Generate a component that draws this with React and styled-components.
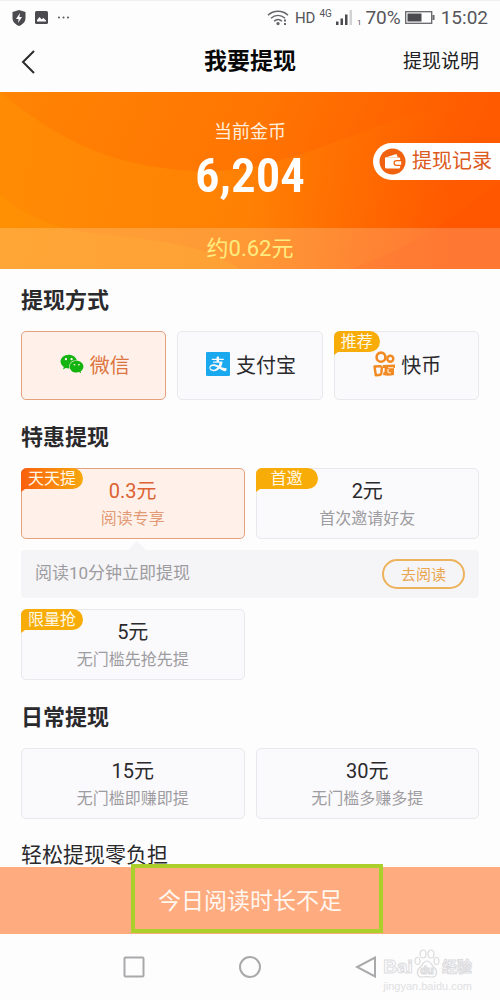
import React from 'react';
import styled, { createGlobalStyle, css } from 'styled-components';
import { AiFillAlipaySquare } from 'react-icons/ai';
import { FaWeixin } from 'react-icons/fa';

const GlobalStyle = createGlobalStyle`
  * {
    box-sizing: border-box;
  }
  body {
    margin: 0;
    background: #fdfdfe;
    color: #2a292c;
    font-family: Roboto, "Noto Sans CJK SC", sans-serif;
  }
  button {
    padding: 0;
    border: 0;
    background: none;
    color: inherit;
    font-family: inherit;
    cursor: pointer;
  }
  a {
    text-decoration: none;
  }
  svg {
    display: block;
    flex: none;
  }
`;

const Screen = styled.div`
  display: flex;
  flex-direction: column;
`;

const StatusBar = styled.div`
  display: flex;
  align-items: center;
  justify-content: space-between;
  height: 32px;
  padding: 2px 12px 0;
  border-top: 1px solid #f0f0f0;
  color: #55555a;
`;

const StatusGroup = styled.div`
  display: flex;
  align-items: center;
  gap: ${(props) => props.$gap}px;
`;

const StatusText = styled.span`
  font-size: ${(props) => props.$size}px;
  line-height: 20px;
`;

const NetworkText = styled.sup`
  align-self: flex-start;
  font-size: 10px;
  line-height: 12px;
`;

const SimText = styled.sub`
  align-self: flex-end;
  font-size: 8px;
  line-height: 10px;
`;

const Header = styled.header`
  display: grid;
  grid-template-columns: 1fr auto 1fr;
  align-items: center;
  height: 60px;
  padding: 0 21px;
`;

const BackButton = styled.button`
  justify-self: start;
`;

const PageTitle = styled.h1`
  margin: 0;
  color: #080808;
  font-size: 23px;
  font-weight: 700;
  line-height: 32px;
`;

const HelpLink = styled.a`
  justify-self: end;
  color: #222;
  font-size: 19px;
  line-height: 28px;
`;

const Hero = styled.section`
  position: relative;
  text-align: center;
  background: linear-gradient(115deg, #ff8404 0%, #ff7602 45%, #ff5a00 85%);
`;

const HeroArt = styled.svg`
  position: absolute;
  inset: 0;
  width: 100%;
  height: 100%;
`;

const Balance = styled.div`
  position: relative;
  display: flex;
  flex-direction: column;
  align-items: center;
  height: 136px;
  padding-top: 27px;
`;

const BalanceLabel = styled.span`
  color: #ffeedd;
  font-size: 18px;
  line-height: 26px;
`;

const Coins = styled.strong`
  color: #fff;
  font-family: "Roboto Condensed", Roboto, sans-serif;
  font-size: 49px;
  font-weight: 600;
  line-height: 62px;
`;

const Approx = styled.div`
  position: relative;
  background: rgba(255, 255, 255, 0.2);
  color: #ffec80;
  font-size: 22px;
  line-height: 41px;
`;

/* sticks to the right edge, over the hero */
const RecordLink = styled.a`
  position: absolute;
  top: 51px;
  right: 0;
  display: flex;
  align-items: center;
  gap: 6px;
  height: 37px;
  padding: 0 8px 0 6px;
  border-radius: 19px 0 0 19px;
  background: #fff;
  color: #dc5a20;
  font-size: 20px;
  line-height: 28px;
`;

const RecordText = styled.span`
  padding-bottom: 1px;
`;

const Content = styled.main`
  padding: 17px 21px 0;
`;

const SectionTitle = styled.h2`
  margin: 0 0 15px;
  font-size: 22px;
  font-weight: 700;
  line-height: 30px;
`;

const NextTitle = styled.h2`
  margin: 0;
  height: 28px;
  overflow: hidden;
  font-size: 21px;
  font-weight: 400;
  line-height: 32px;
`;

const Grid = styled.div`
  display: grid;
  grid-template-columns: repeat(${(props) => props.$columns}, 1fr);
  gap: 11px;
  margin-bottom: ${(props) => props.$space}px;
`;

const Card = styled.button`
  position: relative;
  display: flex;
  align-items: center;
  justify-content: center;
  border: 1px solid #e9e8ec;
  border-radius: 5px;
  background: #faf9fc;

  ${(props) =>
    props.$active &&
    css`
      border-color: #e5a07c;
      background: #fff1ea;
    `}
`;

const MethodCard = styled(Card)`
  gap: 6px;
  height: 69px;
  padding: 0 0 3px 2px;
  color: ${(props) => (props.$active ? '#dc7440' : '#2a292c')};
  font-size: 20px;
`;

const AmountCard = styled(Card)`
  flex-direction: column;
  height: 71px;
  padding-top: 2px;
`;

const Amount = styled.span`
  color: ${(props) => (props.$active ? '#dc6232' : '#2a292c')};
  font-size: 20px;
  line-height: 28px;
`;

const Note = styled.span`
  color: ${(props) => (props.$active ? '#e29a75' : '#9d9ca0')};
  font-size: 16px;
  line-height: 27px;
`;

const Tag = styled.span`
  position: absolute;
  top: -1px;
  left: -1px;
  height: 21px;
  padding: 0 ${(props) => (props.$wide ? 15 : 7)}px;
  border-radius: 6px 11px 11px 0;
  background: ${(props) => (props.$hot ? 'linear-gradient(90deg, #f9600e, #f8a80c)' : '#f8ac08')};
  color: #fff8e6;
  font-size: 16px;
  line-height: 21px;

  &::after {
    content: '';
    position: absolute;
    top: 21px;
    left: 0;
    border-top: 3px solid ${(props) => (props.$hot ? '#f9600e' : '#f8ac08')};
    border-right: 4px solid transparent;
  }
`;

const Tip = styled.div`
  position: relative;
  grid-column: 1 / -1;
  display: flex;
  align-items: center;
  justify-content: space-between;
  height: 48px;
  padding: 0 14px;
  border-radius: 4px;
  background: #f5f4f7;
  color: #9d9ca0;
  font-size: 17px;

  &::before {
    content: '';
    position: absolute;
    bottom: 100%;
    left: 25%;
    margin-left: -8px;
    border: 9px solid transparent;
    border-top: 0;
    border-bottom-color: #f5f4f7;
  }
`;

const TipText = styled.span`
  padding-bottom: 5px;
`;

const ReadButton = styled.button`
  width: 83px;
  height: 30px;
  padding-bottom: 2px;
  border: 2px solid #edb25c;
  border-radius: 15px;
  color: #e9a54c;
  font-size: 15px;
`;

const SubmitBar = styled.footer`
  display: flex;
  justify-content: center;
  height: 67px;
  background: #ffab80;
`;

const SubmitButton = styled.button`
  position: relative;
  width: 50%;
  padding-bottom: 4px;
  color: #fff6ee;
  font-size: 23px;
`;

const Highlight = styled.span`
  position: absolute;
  inset: -3px -8px 1px 6px;
  border: 4px solid #abcf2b;
`;

const NavBar = styled.nav`
  position: relative;
  display: grid;
  grid-template-columns: repeat(3, 116px);
  justify-content: center;
  justify-items: center;
  align-items: center;
  height: 66px;
`;

const Watermark = styled.div`
  position: absolute;
  top: 13px;
  right: 28px;
  color: #e0e0e2;
`;

const WatermarkName = styled.div`
  display: flex;
  align-items: flex-end;
  justify-content: space-between;
  height: 32px;
  color: #fdfdfe;
  font-family: "Liberation Sans", "Noto Sans CJK SC", sans-serif;
  font-size: 19px;
  font-weight: 700;
  line-height: 24px;
  -webkit-text-stroke: 1px #dcdcde;
`;

const WatermarkCjk = styled.span`
  font-size: 15px;
`;

const WatermarkUrl = styled.div`
  font-family: "Liberation Sans", sans-serif;
  font-size: 11px;
  line-height: 14px;
`;

const methods = [
  { name: '微信', icon: 'wechat', active: true },
  { name: '支付宝', icon: 'alipay' },
  { name: '快币', icon: 'kuai', tag: '推荐' },
];

const specials = [
  { amount: '0.3元', note: '阅读专享', tag: '天天提', hot: true, active: true },
  { amount: '2元', note: '首次邀请好友', tag: '首邀', wide: true },
];

const limited = [{ amount: '5元', note: '无门槛先抢先提', tag: '限量抢' }];

const daily = [
  { amount: '15元', note: '无门槛即赚即提' },
  { amount: '30元', note: '无门槛多赚多提' },
];

const KuaiIcon = () => (
  <svg width="22" height="26" viewBox="0 0 22 26" fill="none" stroke="#f28a24" aria-hidden="true">
    <ellipse cx="8" cy="6.200" rx="4.400" ry="4.600" strokeWidth="2.600" />
    <circle cx="17.300" cy="7.800" r="3" strokeWidth="2.400" />
    <path d="M1.500 15.500l5.500-.3q2 0 1.800 2.300l-.5 4.500q-.3 2-2.300 2l-3.200.2z" strokeWidth="2.400" strokeLinejoin="round" />
    <path d="M10 14l12-.5v3.500h-1v7q-6 1.500-11 0l.6-3h1V17H10z" fill="#f28a24" stroke="none" />
    <path d="M15 16.800h5.500M15.300 21.800h2.500M15 18v3.500" stroke="#fdf3ea" strokeWidth="1.100" />
  </svg>
);

const MethodIcon = ({ icon }) => {
  if (icon === 'wechat') return <FaWeixin size={24} color="#14b30f" />;
  if (icon === 'alipay') return <AiFillAlipaySquare size={24} viewBox="112 112 800 800" color="#1aa9ee" />;
  return <KuaiIcon />;
};

const AmountOption = ({ option }) => (
  <AmountCard type="button" $active={option.active}>
    {option.tag && <Tag $hot={option.hot} $wide={option.wide}>{option.tag}</Tag>}
    <Amount $active={option.active}>{option.amount}</Amount>
    <Note $active={option.active}>{option.note}</Note>
  </AmountCard>
);

const Status = () => (
  <StatusBar>
    <StatusGroup $gap={9}>
      <svg width="14" height="16" viewBox="0 0 14 16">
        <path d="M7 0l6.500 2v6c0 4-3 6.500-6.500 8C3.500 14.500.5 12 .5 8V2z" fill="#4b4b4f" />
        <path d="M8 3L4 9h2.600L6 13l4-6H7.400z" fill="#fff" />
      </svg>
      <svg width="13" height="13" viewBox="0 0 13 13">
        <rect width="13" height="13" rx="1.500" fill="#4b4b4f" />
        <path d="M2 10.500V9l2.500-3 2 2.300L8.500 7l2.500 2.500v1z" fill="#fff" />
      </svg>
      <svg width="13" height="3" viewBox="0 0 13 3" fill="#55555a">
        <circle cx="2" cy="1.500" r="1" />
        <circle cx="6.500" cy="1.500" r="1" />
        <circle cx="11" cy="1.500" r="1" />
      </svg>
    </StatusGroup>
    <StatusGroup $gap={4}>
      <svg width="24" height="16" viewBox="0 0 24 16" fill="none" stroke="#66666a" strokeWidth="1.400">
        <path d="M1 5.200c5.500-5.300 14.500-5.300 20 0M4 8.300c4-3.900 10-3.900 14 0M7 11.300c2.500-2.300 5.500-2.300 8 0" />
        <circle cx="11" cy="13.600" r="1" fill="#66666a" />
        <path d="M18 9.500v2M18 13v2" strokeWidth="2" />
      </svg>
      <StatusText $size={15}>HD</StatusText>
      <NetworkText>4G</NetworkText>
      <svg width="17" height="15" viewBox="0 0 17 15" fill="#4b4b4f">
        <path d="M0 11.500h2.500V15H0zM4.500 8.500H7V15H4.500zM9 4.500h2.500V15H9z" />
        <path d="M13.500 0H16v15h-2.500z" fill="#d2d2d4" />
      </svg>
      <SimText>1</SimText>
      <StatusText $size={19}>70%</StatusText>
      <svg width="32" height="13" viewBox="0 0 32 13">
        <rect x=".7" y=".7" width="26" height="11.600" fill="none" stroke="#66666a" strokeWidth="1.300" />
        <path d="M2.500 2.500h14v8h-14z" fill="#4b4b4f" />
        <path d="M27.500 4h2v5h-2z" fill="#66666a" />
      </svg>
      <StatusText $size={19}>15:02</StatusText>
    </StatusGroup>
  </StatusBar>
);

const App = () => (
  <>
    <GlobalStyle />
    <Screen>
      <Status />
      <Header>
        <BackButton type="button" aria-label="返回">
          <svg width="14" height="24" viewBox="0 0 14 24" fill="none" stroke="#2c2c2e" strokeWidth="2">
            <path d="M13 1L2 12l11 11" />
          </svg>
        </BackButton>
        <PageTitle>我要提现</PageTitle>
        <HelpLink href="#">提现说明</HelpLink>
      </Header>

      <Hero>
        <HeroArt viewBox="0 0 500 177" preserveAspectRatio="none" aria-hidden="true">
          <defs>
            <linearGradient id="swell" x1="0" x2="1">
              <stop offset="0" stopColor="#ff8d04" />
              <stop offset="0.500" stopColor="#ff8404" />
              <stop offset="0.900" stopColor="#ff6a00" stopOpacity="0" />
            </linearGradient>
          </defs>
          <path d="M0 0C60 50 120 79 210 79S380 20 500 0V177H0z" fill="url(#swell)" opacity="0.800" />
          <path d="M0 103C30 125 55 138 100 142C150 148 200 150 240 177H0z" fill="#ff9806" opacity="0.400" />
          <path d="M350 177C430 150 470 110 500 90v87z" fill="#ff5200" opacity="0.350" />
        </HeroArt>
        <Balance>
          <BalanceLabel>当前金币</BalanceLabel>
          <Coins>6,204</Coins>
        </Balance>
        <Approx>约0.62元</Approx>
        <RecordLink href="#">
          <svg width="27" height="27" viewBox="0 0 27 27" aria-hidden="true">
            <circle cx="13.500" cy="13.500" r="13" fill="#f0620f" />
            <path d="M6.500 9.500L17.500 6l1.300 3.500z" fill="#fff" />
            <path d="M6 9.500h14q1.200 0 1.200 1.200V12h-3.700a3 3 0 0 0 0 6h3.700v1q0 1.500-1.500 1.500H7.500Q6 20.500 6 19z" fill="#fff" />
            <path d="M17.500 13.200h4.700v3.600h-4.700a1.800 1.800 0 0 1 0-3.600z" fill="#fff" />
          </svg>
          <RecordText>提现记录</RecordText>
        </RecordLink>
      </Hero>

      <Content>
        <SectionTitle>提现方式</SectionTitle>
        <Grid $columns={3} $space={23}>
          {methods.map((method) => (
            <MethodCard type="button" key={method.name} $active={method.active}>
              {method.tag && <Tag>{method.tag}</Tag>}
              <MethodIcon icon={method.icon} />
              {method.name}
            </MethodCard>
          ))}
        </Grid>

        <SectionTitle>特惠提现</SectionTitle>
        <Grid $columns={2} $space={23}>
          {specials.map((option) => (
            <AmountOption key={option.amount} option={option} />
          ))}
          <Tip>
            <TipText>阅读10分钟立即提现</TipText>
            <ReadButton type="button">去阅读</ReadButton>
          </Tip>
          {limited.map((option) => (
            <AmountOption key={option.amount} option={option} />
          ))}
        </Grid>

        <SectionTitle>日常提现</SectionTitle>
        <Grid $columns={2} $space={20}>
          {daily.map((option) => (
            <AmountOption key={option.amount} option={option} />
          ))}
        </Grid>
        <NextTitle>轻松提现零负担</NextTitle>
      </Content>

      <SubmitBar>
        <SubmitButton type="button">
          今日阅读时长不足
          <Highlight />
        </SubmitButton>
      </SubmitBar>

      <NavBar>
        <button type="button" aria-label="最近任务">
          <svg width="22" height="22" viewBox="0 0 22 22" fill="none" stroke="#a9a9ab" strokeWidth="2">
            <rect x="1.500" y="1.500" width="19" height="19" rx="1" />
          </svg>
        </button>
        <button type="button" aria-label="主屏幕">
          <svg width="24" height="24" viewBox="0 0 24 24" fill="none" stroke="#a9a9ab" strokeWidth="2">
            <circle cx="12" cy="12" r="10" />
          </svg>
        </button>
        <button type="button" aria-label="返回上一页">
          <svg width="22" height="22" viewBox="0 0 22 22" fill="none" stroke="#a9a9ab" strokeWidth="2">
            <path d="M20 1.500v19L2 11z" />
          </svg>
        </button>
        <Watermark>
          <WatermarkName>
            Bai
            <svg width="26" height="30" viewBox="0 0 26 30" fill="none" stroke="#dcdcde" strokeWidth="1.200">
              <ellipse cx="3.500" cy="12" rx="2.500" ry="3.500" />
              <ellipse cx="9" cy="5" rx="3" ry="4" />
              <ellipse cx="17" cy="5" rx="3" ry="4" />
              <ellipse cx="22.500" cy="12" rx="2.500" ry="3.500" />
              <path d="M13 12c-4 0-4 4-8 7.500-3 3-1.500 9 3 8.500 3-.5 7-.5 10 0 4.500.5 6-5.500 3-8.500C17 16 17 12 13 12z" />
              <text x="13" y="25" textAnchor="middle" fontSize="11" fontWeight="700" fill="#fdfdfe">du</text>
            </svg>
            <WatermarkCjk>经验</WatermarkCjk>
          </WatermarkName>
          <WatermarkUrl>jingyan.baidu.com</WatermarkUrl>
        </Watermark>
      </NavBar>
    </Screen>
  </>
);

export default App;
